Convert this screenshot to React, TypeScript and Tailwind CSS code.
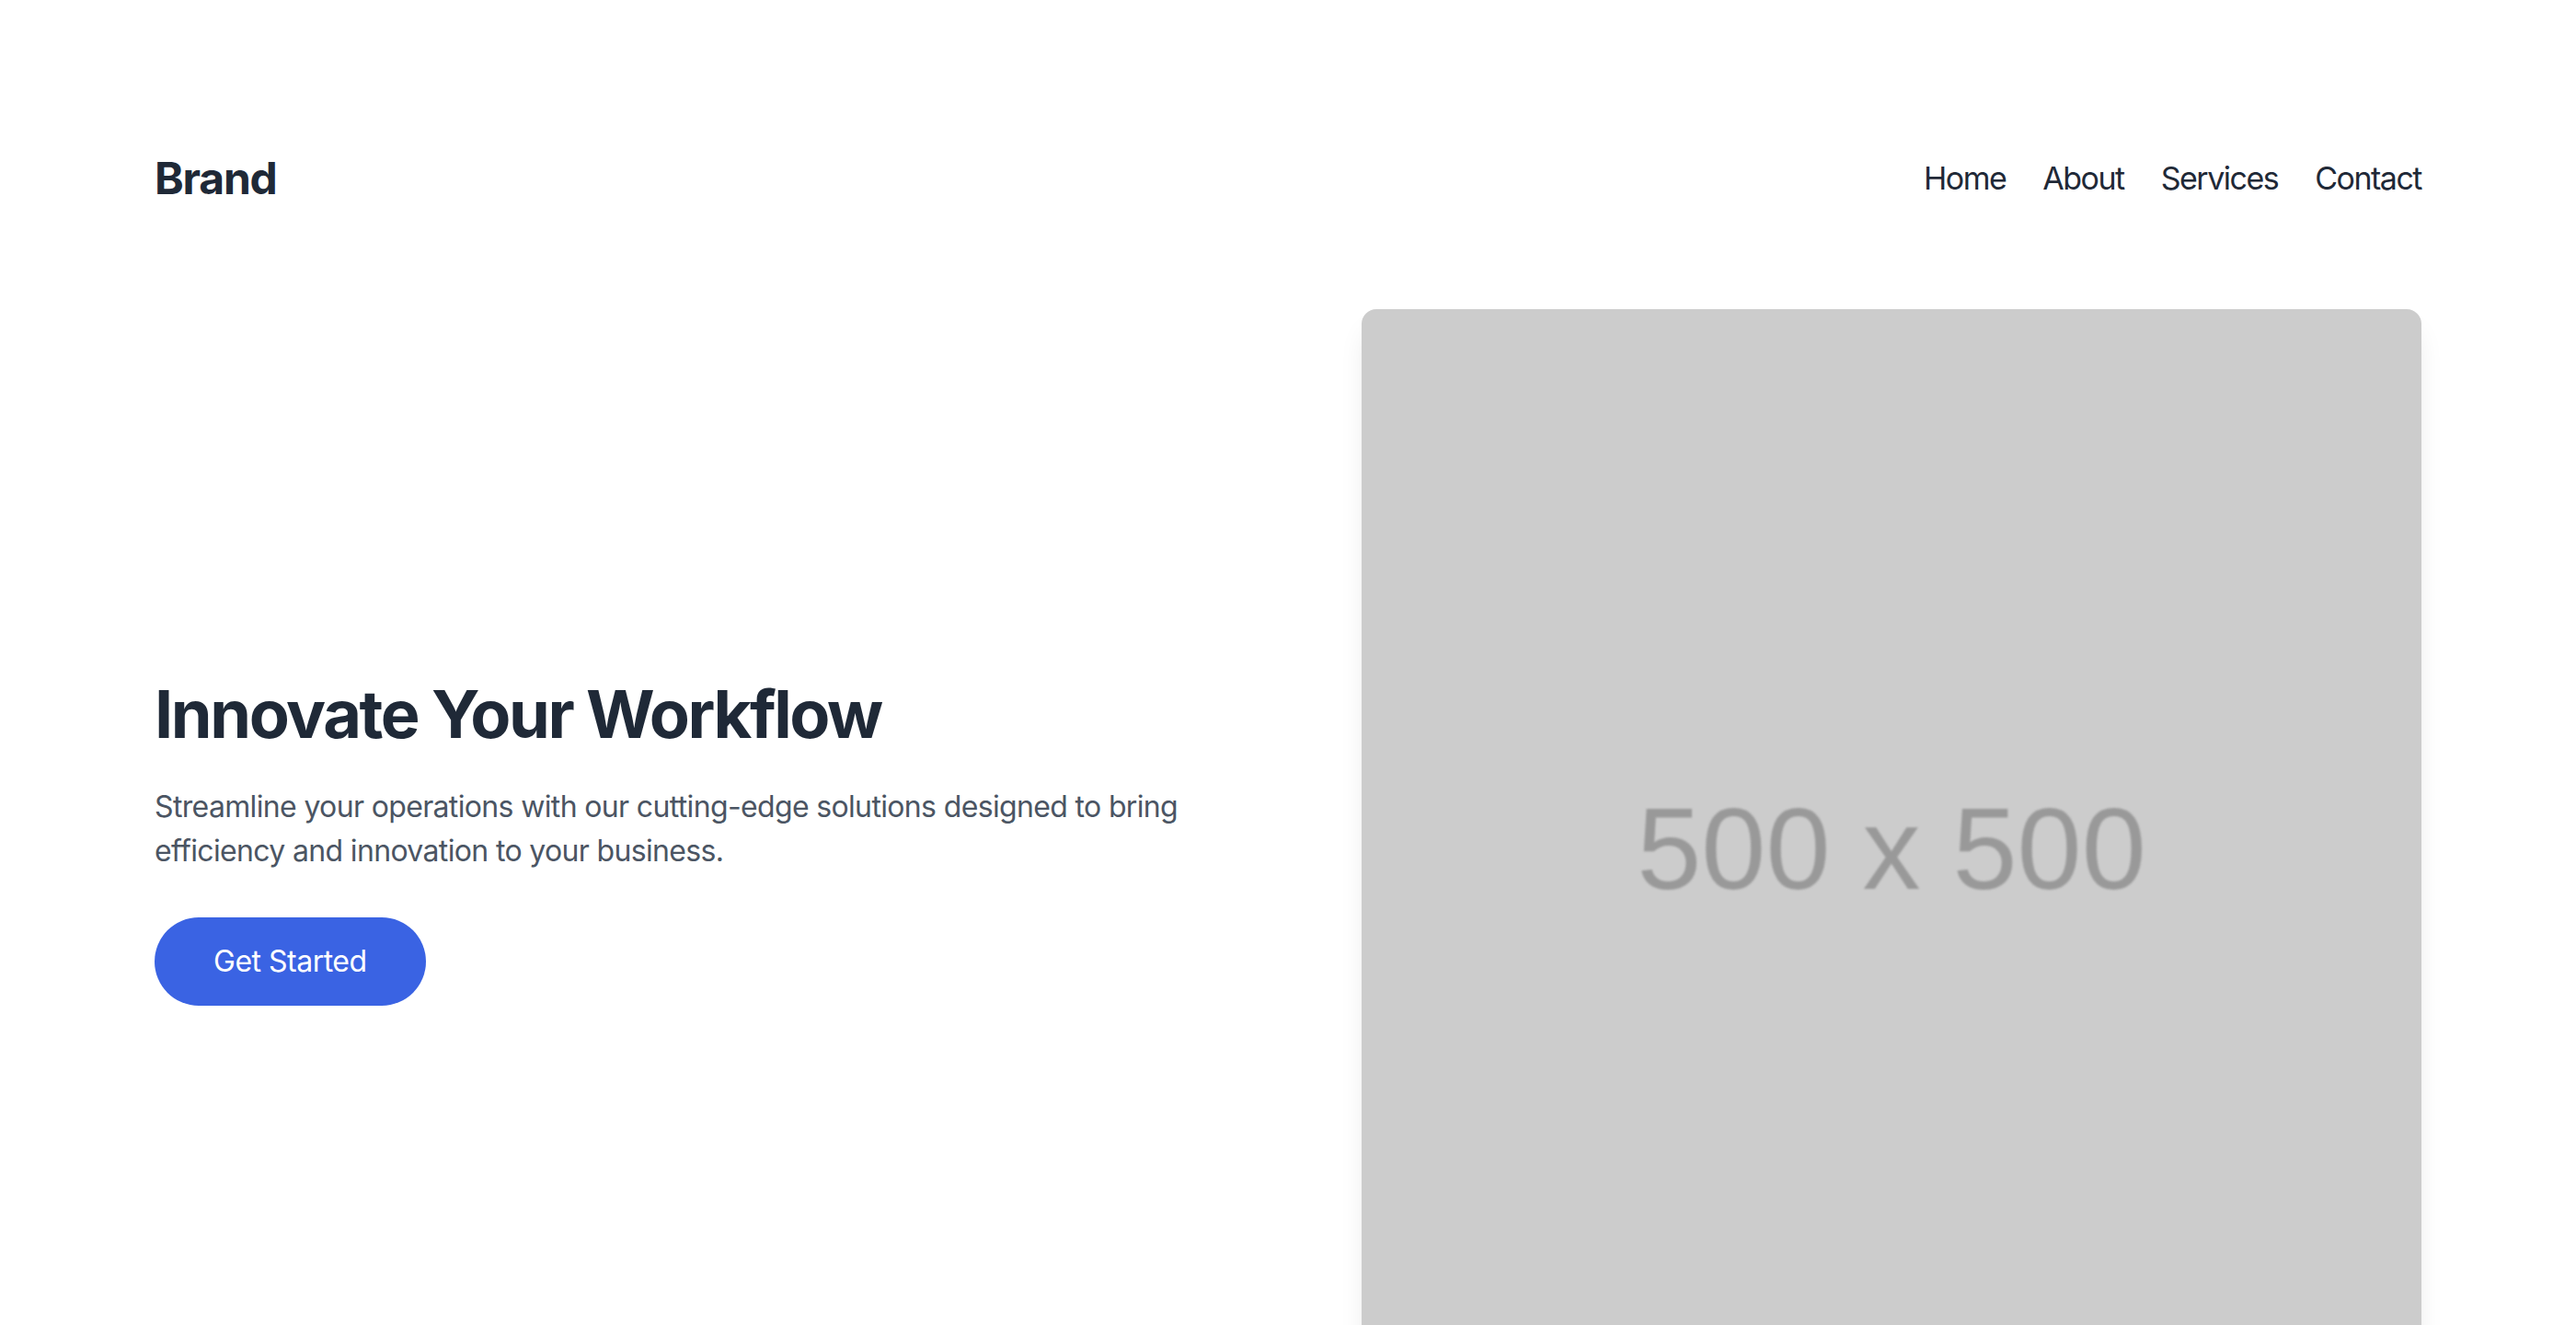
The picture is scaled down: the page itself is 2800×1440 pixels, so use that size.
import React from 'react';

const navLinks = ['Home', 'About', 'Services', 'Contact'];

const Header: React.FC = () => (
  <header className="flex items-center justify-between pt-[162px]">
    <a href="#" className="text-[48px] leading-[64px] font-bold text-[#1f2937] tracking-[-1.2px]">
      Brand
    </a>
    <nav className="flex items-center gap-[40px]">
      {navLinks.map((link) => (
        <a key={link} href="#" className="text-[34px] leading-[56px] text-[#1f2937] tracking-[-1.5px]">
          {link}
        </a>
      ))}
    </nav>
  </header>
);

const Placeholder: React.FC = () => (
  <div className="w-full aspect-square rounded-[16px] bg-[#cccccc] shadow-[0_20px_30px_-6px_rgba(0,0,0,0.1),0_8px_12px_-8px_rgba(0,0,0,0.1)] flex items-center justify-center pt-[22px]">
    <span className="font-['Liberation_Sans',Arial,sans-serif] text-[126px] leading-none text-[#999999] blur-[1px] select-none">
      500 x 500
    </span>
  </div>
);

const Hero: React.FC = () => (
  <section className="grid grid-cols-2 gap-[160px] items-center mt-[110px]">
    <div className="pt-[5px]">
      <h1 className="text-[72px] leading-[80px] font-bold text-[#1f2937] tracking-[-2.4px] mb-[37px]">
        Innovate Your Workflow
      </h1>
      <p className="text-[32px] leading-[48px] text-[#4b5563] tracking-[-0.65px] mb-[48px]">
        Streamline your operations with our cutting-edge solutions designed to bring efficiency and innovation to your business.
      </p>
      <button className="rounded-full bg-[#3a63e3] px-[64px] py-[24px] text-[32px] leading-[48px] text-white tracking-[-0.5px]">
        Get Started
      </button>
    </div>
    <Placeholder />
  </section>
);

export default function App() {
  return (
    <div className="min-h-screen bg-white font-['Inter','Noto_Sans',sans-serif]">
      <div className="mx-auto max-w-[2560px] px-[48px]">
        <Header />
        <Hero />
      </div>
    </div>
  );
}
